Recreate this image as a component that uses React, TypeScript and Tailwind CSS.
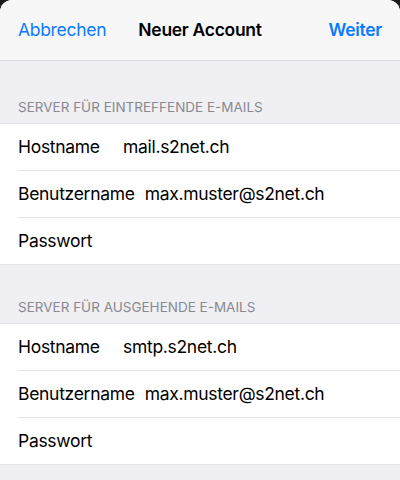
import React from 'react';

type Row = { label: string; value?: string };

const sections: { title: string; rows: Row[] }[] = [
  {
    title: 'Server für eintreffende E-Mails',
    rows: [
      { label: 'Hostname', value: 'mail.s2net.ch' },
      { label: 'Benutzername', value: 'max.muster@s2net.ch' },
      { label: 'Passwort' },
    ],
  },
  {
    title: 'Server für ausgehende E-Mails',
    rows: [
      { label: 'Hostname', value: 'smtp.s2net.ch' },
      { label: 'Benutzername', value: 'max.muster@s2net.ch' },
      { label: 'Passwort' },
    ],
  },
];

const App: React.FC = () => {
  return (
    <div className="w-[400px] h-[480px] overflow-hidden bg-[#1c1c1e] font-['Inter',sans-serif]">
      <div className="h-full rounded-t-[12px] overflow-hidden bg-[#efeff4]">
        <header className="h-[61px] bg-[#f7f7f7] border-b border-[#dcdcdf] grid grid-cols-[1fr_auto_1fr] items-center px-[18px] text-[17.5px] tracking-[-0.3px]">
          <button className="justify-self-start text-[#0a7aff]">Abbrechen</button>
          <h1 className="font-semibold text-black">Neuer Account</h1>
          <button className="justify-self-end text-[#0a7aff] font-semibold">Weiter</button>
        </header>

        {sections.map((s, i) => (
          <section key={s.title}>
            <div className={`${i === 0 ? 'h-[62px]' : 'h-[58px]'} flex items-end px-[18px] pb-[8px]`}>
              <span className="uppercase text-[13.5px] leading-[16px] text-[#8a8a8e]">{s.title}</span>
            </div>
            <div className="bg-white border-y border-[#e4e4e7]">
              {s.rows.map((r, j) => (
                <div key={r.label} className="pl-[18px]">
                  <div
                    className={`flex items-center gap-[10px] text-[17.5px] text-black tracking-[-0.3px] ${
                      j < s.rows.length - 1 ? 'border-b border-[#e4e4e7] h-[47px]' : 'h-[46px]'
                    }`}
                  >
                    <span className="min-w-[95px]">{r.label}</span>
                    {r.value && <span>{r.value}</span>}
                  </div>
                </div>
              ))}
            </div>
          </section>
        ))}
      </div>
    </div>
  );
};

export default App;
